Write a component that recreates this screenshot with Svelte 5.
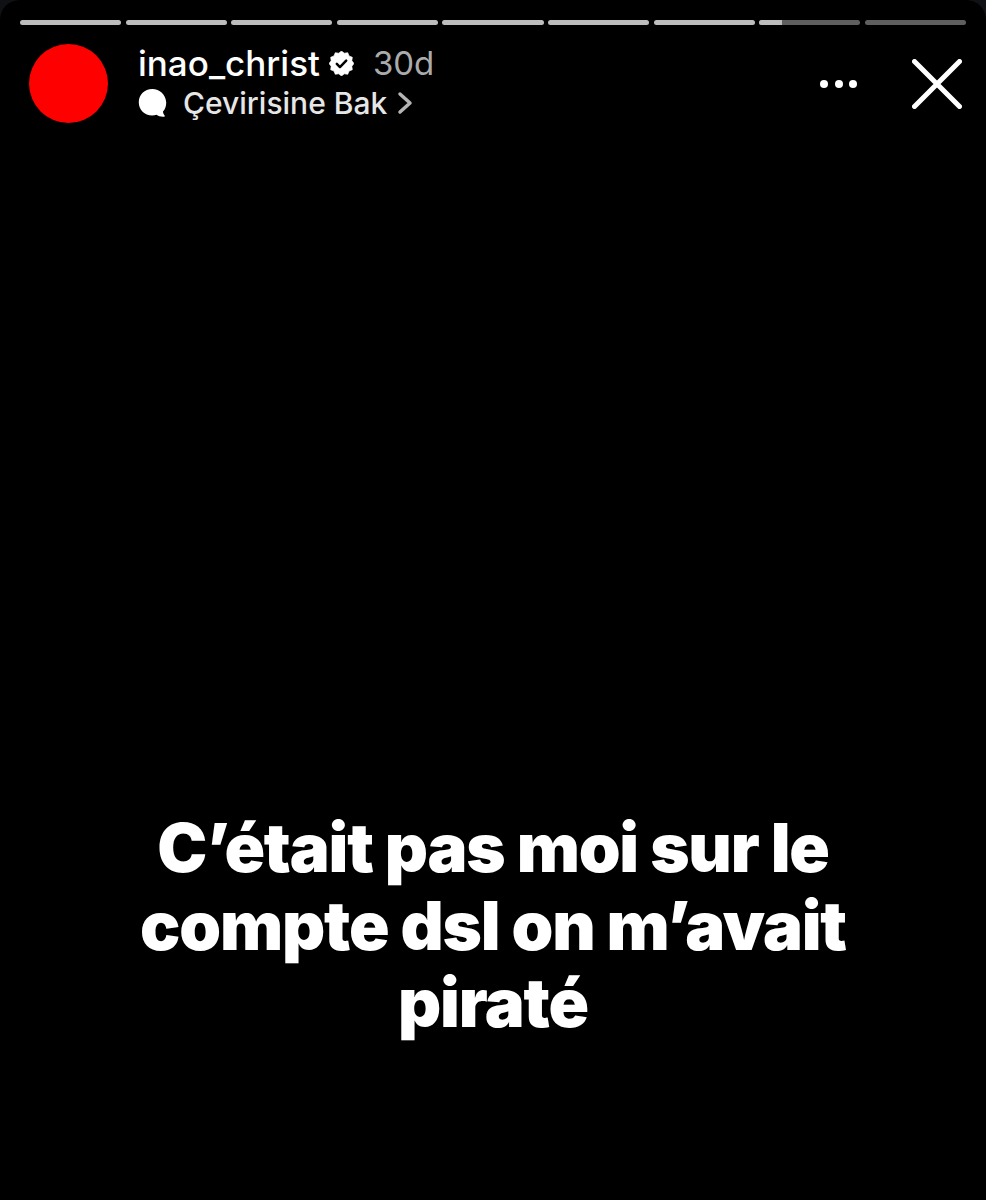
<script>
  const segments = [100, 100, 100, 100, 100, 100, 100, 22, 0];
  const lines = ["C’était pas moi sur le", "compte dsl on m’avait", "piraté"];
  const points = 24;
  const badgePoints = Array.from({ length: points }, (_, i) => {
    const r = i % 2 ? 10.3 : 12;
    const a = (i / points) * 2 * Math.PI;
    return `${(12 + r * Math.sin(a)).toFixed(2)},${(12 - r * Math.cos(a)).toFixed(2)}`;
  }).join(" ");
</script>

<div class="screen">
  <div class="bars">
    {#each segments as s}
      <div class="bar"><div class="fill" style="width:{s}%"></div></div>
    {/each}
  </div>
  <header class="head">
    <div class="avatar"></div>
    <div class="meta">
      <div class="row1">
        <span class="name">inao_christ</span>
        <svg class="badge" viewBox="0 0 24 24" width="25" height="25">
          <polygon fill="#fff" stroke="#fff" stroke-width="0.6" stroke-linejoin="round" points={badgePoints}/>
          <path fill="none" stroke="#000" stroke-width="2.400" stroke-linecap="round" stroke-linejoin="round" d="M7.500 12.400l3 3 6-6.200"/>
        </svg>
        <span class="time">30d</span>
      </div>
      <div class="row2">
        <svg class="bubble" viewBox="1.500 1.500 25.500 26" width="29" height="28">
          <path fill="#fff" d="M14 1.500C6.900 1.500 1.500 6.800 1.500 13.700S6.900 26 14 26c1.400 0 2.700-.2 3.900-.6 1.700 1.200 4.300 2.100 7.200 1.800.6-.1.800-.7.400-1.100-1-1-1.500-2.300-1.500-3.600 2-2.200 3-5.200 3-8.800C26.500 6.800 21.100 1.500 14 1.500z"/>
        </svg>
        <span class="translate">Çevirisine Bak</span>
        <svg class="chev" viewBox="0 0 16 24" width="16" height="24">
          <path fill="none" stroke="#b4b4b4" stroke-width="3.500" stroke-linecap="round" stroke-linejoin="round" d="M3 3l10 9-10 9"/>
        </svg>
      </div>
    </div>
    <div class="actions">
      <div class="dots"><i></i><i></i><i></i></div>
      <svg class="close" viewBox="0 0 50 50" width="50" height="50">
        <path fill="none" stroke="#fff" stroke-width="5" stroke-linecap="round" d="M2.500 2.500l45 45M47.500 2.500l-45 45"/>
      </svg>
    </div>
  </header>
  <main class="message">
    {#each lines as line}
      <div class="line">{line}</div>
    {/each}
  </main>
</div>

<style>
  :global(body) {
    margin: 0;
    background: #101114;
  }
  .screen {
    box-sizing: border-box;
    width: 986px;
    height: 1200px;
    background: #000;
    border-radius: 20px 20px 0 0;
    padding: 19.5px 20px 0;
    overflow: hidden;
    font-family: Inter, "Liberation Sans", sans-serif;
    color: #fff;
  }
  .bars {
    display: flex;
    gap: 4.5px;
    height: 5px;
  }
  .bar {
    flex: 1;
    background: #5f5f5f;
    border-radius: 3px;
    overflow: hidden;
  }
  .fill {
    height: 100%;
    background: #bdbdbd;
  }
  .head {
    display: flex;
    align-items: center;
    height: 79px;
    margin: 19.5px 4px 0 9px;
  }
  .avatar {
    width: 79px;
    height: 79px;
    border-radius: 50%;
    background: #fe0000;
    flex: none;
  }
  .meta {
    margin-left: 30px;
    flex: 1;
    align-self: flex-start;
    margin-top: -2px;
  }
  .row1 {
    display: flex;
    align-items: center;
    height: 42px;
  }
  .name {
    font-size: 35px;
    font-weight: 500;
  }
  .badge {
    margin-left: 9px;
  }
  .time {
    margin-left: 19px;
    font-size: 33px;
    font-weight: 400;
    color: #ababab;
  }
  .row2 {
    display: flex;
    align-items: center;
    height: 36px;
    margin-top: 1px;
  }
  .translate {
    margin-left: 16px;
    font-size: 30px;
    font-weight: 500;
    color: #e6e6e6;
  }
  .chev {
    margin-left: 10px;
  }
  .actions {
    display: flex;
    align-items: center;
    gap: 55px;
  }
  .dots {
    display: flex;
    gap: 6.500px;
  }
  .dots i {
    width: 8px;
    height: 8px;
    border-radius: 50%;
    background: #fff;
  }
  .message {
    margin-top: 686px;
    text-align: center;
    font-size: 67px;
    font-weight: 900;
    line-height: 77.500px;
    letter-spacing: -1.2px;
    white-space: nowrap;
  }
</style>
